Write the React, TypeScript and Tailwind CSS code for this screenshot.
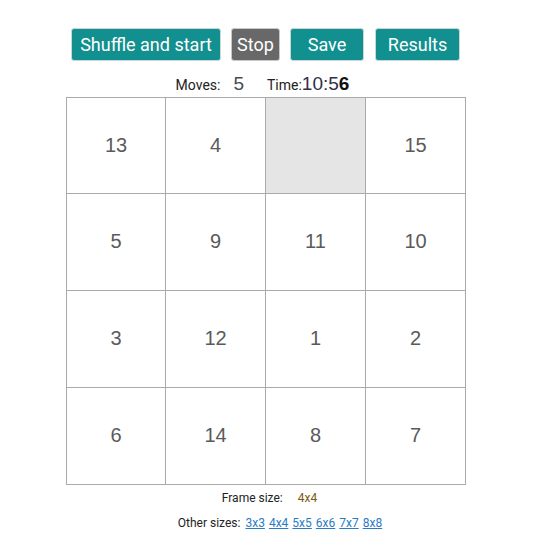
import React from "react";

const tiles: (number | null)[] = [13, 4, null, 15, 5, 9, 11, 10, 3, 12, 1, 2, 6, 14, 8, 7];

export default function App() {
  return (
    <div className="w-[535px] h-[547px] bg-white flex flex-col items-center pt-[28px]" style={{ fontFamily: "Roboto, sans-serif" }}>
      <div className="flex items-center ml-[-4px]">
        <button className="h-[33px] w-[150px] rounded-[3px] bg-[#128f8f] border border-[#c8d8d8] text-white text-[18px]">Shuffle and start</button>
        <button className="ml-[10px] h-[33px] w-[49px] rounded-[3px] bg-[#686868] border border-[#c8c8c8] text-white text-[18px]">Stop</button>
        <button className="ml-[10px] h-[33px] w-[74px] rounded-[3px] bg-[#128f8f] border border-[#c8d8d8] text-white text-[18px]">Save</button>
        <button className="ml-[11px] h-[33px] w-[85px] rounded-[3px] bg-[#128f8f] border border-[#c8d8d8] text-white text-[18px]">Results</button>
      </div>
      <div className="flex items-baseline h-[22px] mt-[9px] ml-[-10px]">
        <span className="text-[14px] text-[#222]">Moves:</span>
        <span className="text-[19px] text-[#4a4a55] ml-[13px]" style={{ fontFamily: '"Liberation Sans", Arial, sans-serif' }}>5</span>
        <span className="text-[14px] text-[#222] ml-[23px]">Time:</span>
        <span className="text-[19px] text-[#303048]" style={{ fontFamily: '"Liberation Sans", Arial, sans-serif' }}>10:5<span className="font-semibold text-[#111]">6</span></span>
      </div>
      <div className="mt-[5px] ml-[-3px] grid grid-cols-[99px_100px_100px_100px] grid-rows-[96px_97px_97px_97px] border-t border-l border-[#aaaaaa]">
        {tiles.map((t, i) => (
          <div
            key={i}
            className={`border-r border-b border-[#aaaaaa] flex items-center justify-center pb-[2px] text-[20px] text-[#5a5a5a] ${t === null ? "bg-[#e5e5e5]" : "bg-white"}`}
            style={{ fontFamily: '"Liberation Sans", Arial, sans-serif' }}
          >
            {t ?? ""}
          </div>
        ))}
      </div>
      <div className="flex items-baseline mt-[4px] text-[12px] ml-[4px]">
        <span className="text-[#222]">Frame size:</span>
        <span className="ml-[15px] text-[#7a5a10]">4x4</span>
      </div>
      <div className="flex items-baseline mt-[7px] text-[12px] ml-[25px] gap-[4px]">
        <span className="text-[#222] mr-[1px]">Other sizes:</span>
        {["3x3", "4x4", "5x5", "6x6", "7x7", "8x8"].map((s) => (
          <a key={s} href="#" className="text-[#2a7bc4] underline">{s}</a>
        ))}
      </div>
    </div>
  );
}
